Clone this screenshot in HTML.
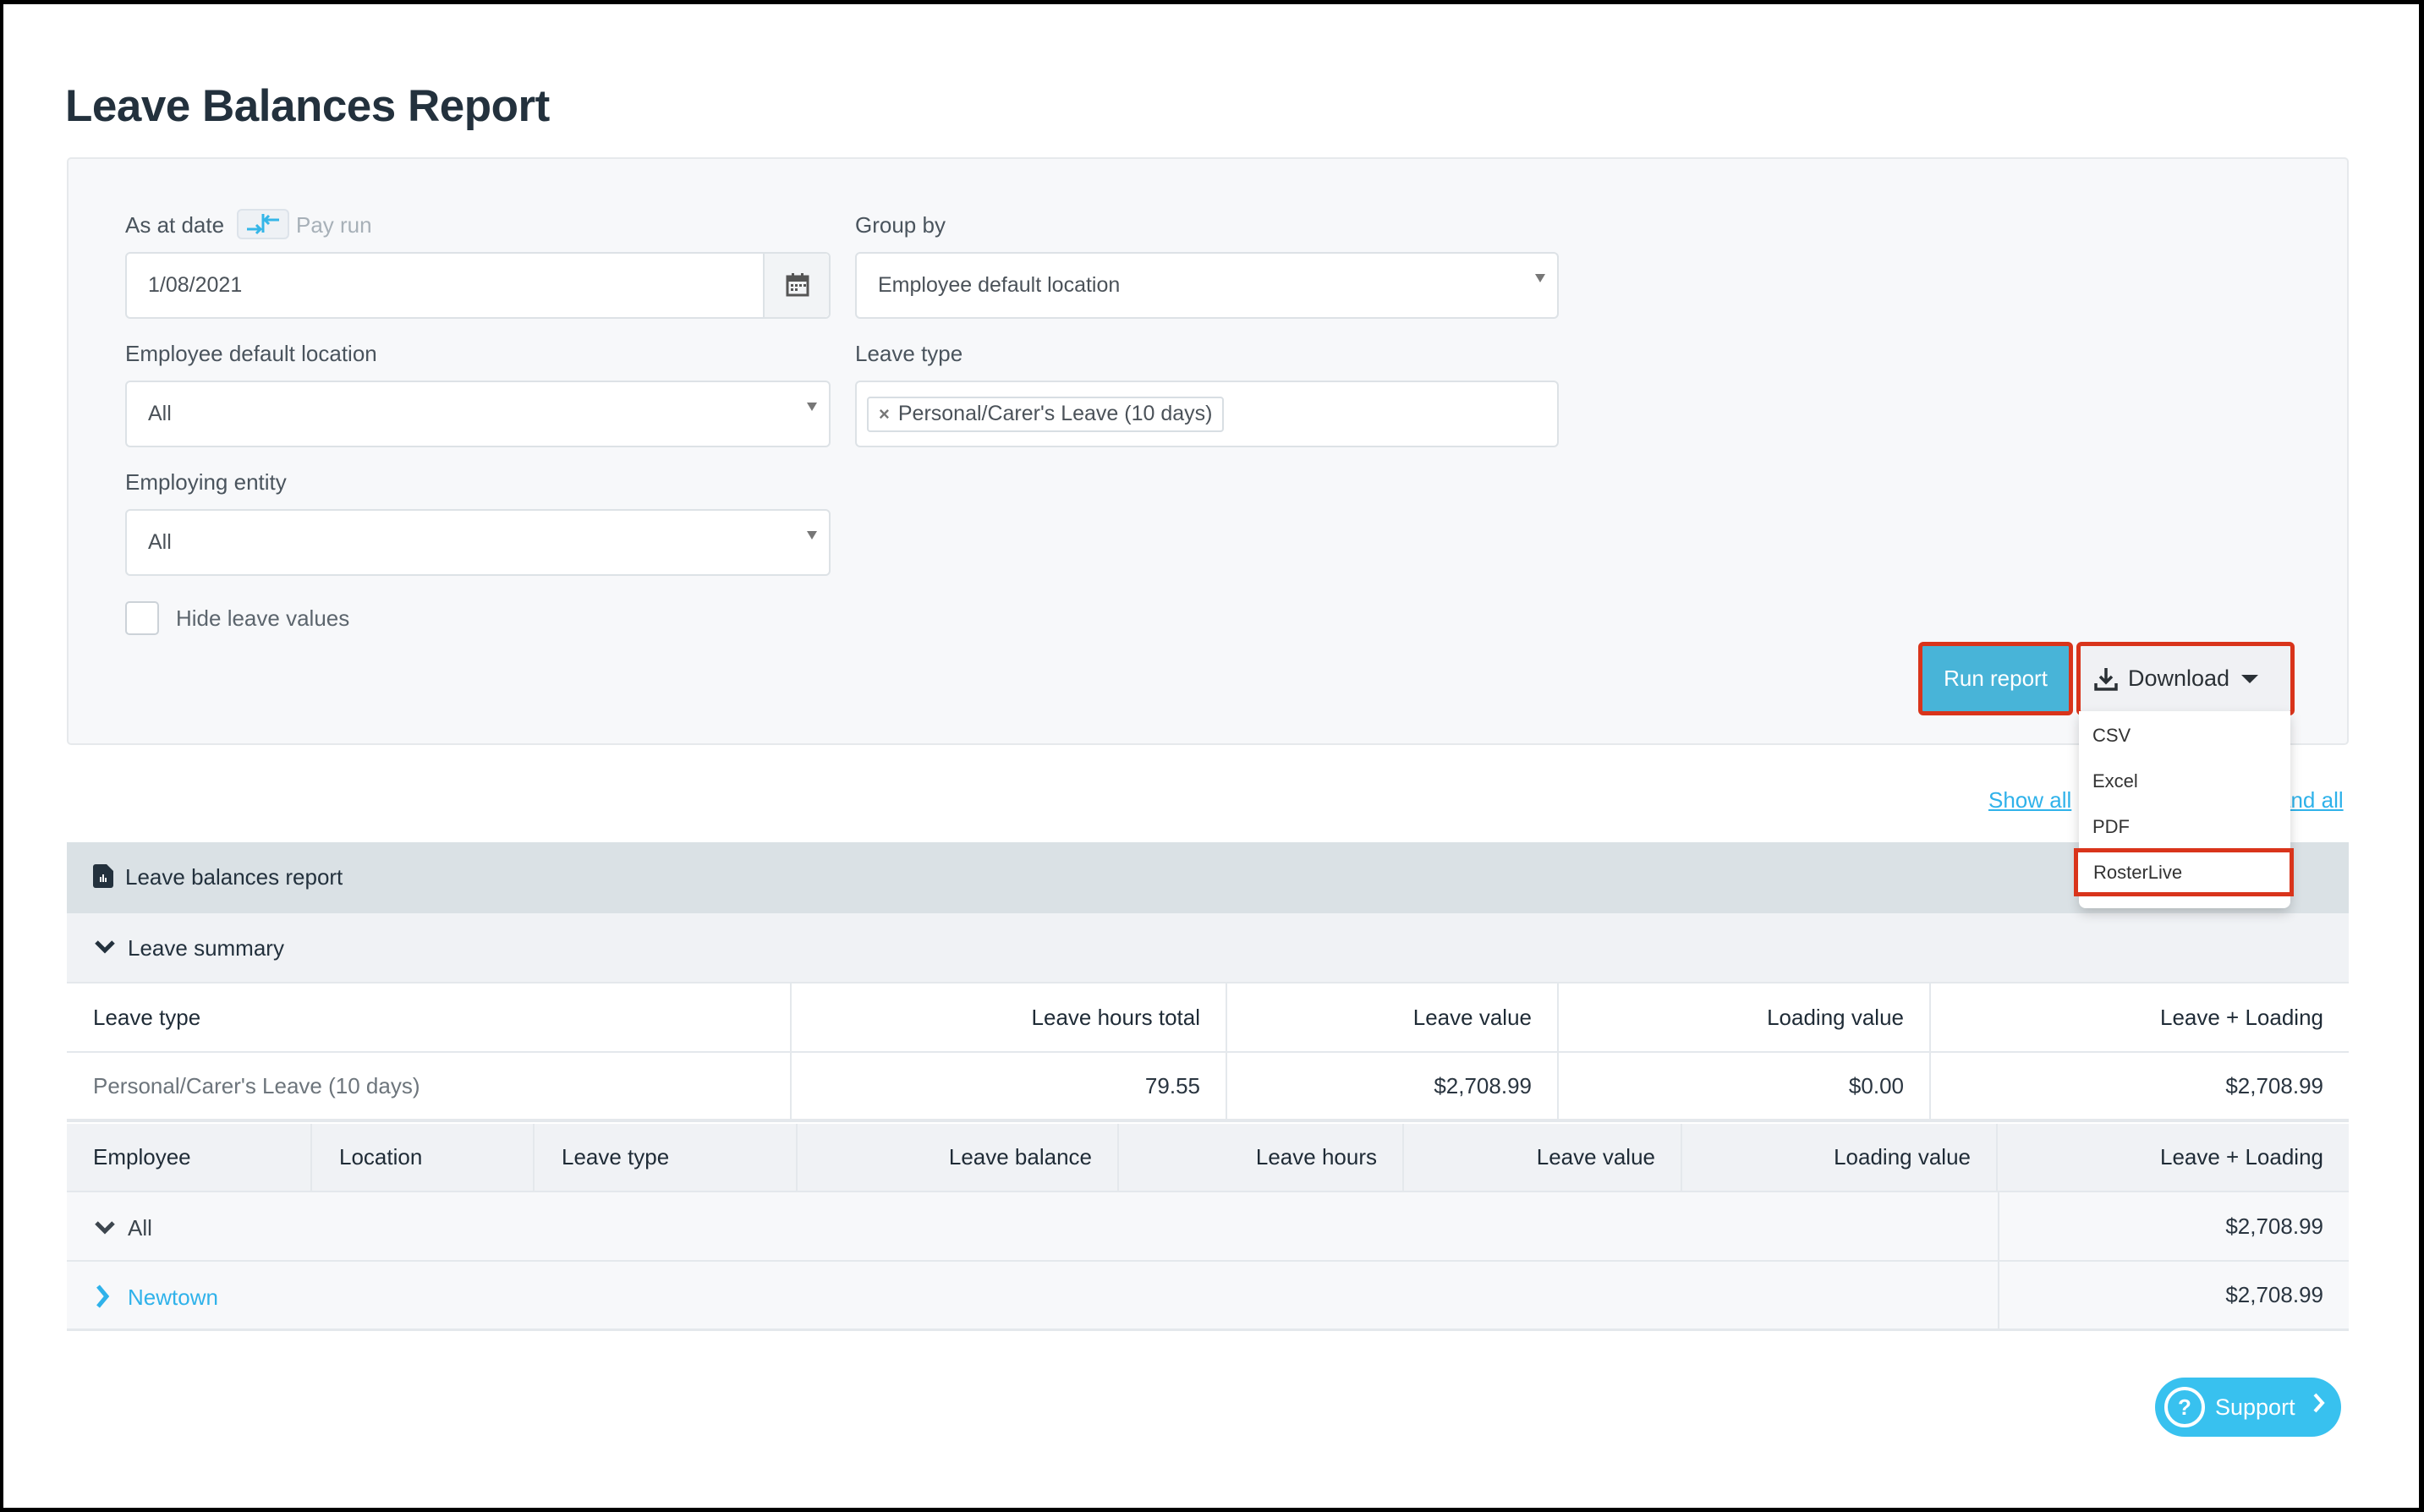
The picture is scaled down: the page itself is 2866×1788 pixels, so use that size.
<!DOCTYPE html>
<html><head><meta charset="utf-8">
<style>
*{box-sizing:border-box;margin:0;padding:0}
html,body{width:2866px;height:1788px;overflow:hidden;background:#000}
#page{position:absolute;left:4px;top:5px;width:2856px;height:1778px;background:#fff;font-family:"Liberation Sans",sans-serif;color:#2a3540}
.a{position:absolute}
.lbl{position:absolute;font-size:26px;color:#4a545d;white-space:nowrap}
.inp{position:absolute;background:#fff;border:2px solid #dde2e6;border-radius:6px;font-size:25px;color:#4b5259;padding-left:25px;display:flex;align-items:center}
.caret{position:absolute;right:14px;top:24px;width:0;height:0;border-left:6px solid transparent;border-right:6px solid transparent;border-top:10px solid #777}
.row{position:absolute;left:75px;width:2698px;border-bottom:2px solid #e4e8ec}
.c{position:absolute;top:0;height:100%;display:flex;align-items:center;font-size:26px;white-space:nowrap;border-right:2px solid #e4e8ec}
.r{justify-content:flex-end;padding-right:30px}
.l{padding-left:31px}
.h{color:#1f2b36}
</style></head><body><div id="page">
<div class="a" style="left:73px;top:90px;font-size:53px;font-weight:bold;color:#23313d;white-space:nowrap;letter-spacing:-0.5px">Leave Balances Report</div>

<div class="a" style="left:75px;top:181px;width:2698px;height:695px;background:#f7f8fa;border:2px solid #e6e9ec;border-radius:5px"></div>

<div class="lbl" style="left:144px;top:246px">As at date</div>
<div class="a" style="left:276px;top:242px;width:62px;height:36px;border:2px solid #dde3ea;border-radius:6px;background:#eef1f5">
<svg width="58" height="32" viewBox="0 0 58 32"><path d="M10 22h16m-5-5 5 5-5 5" stroke="#35b6e8" stroke-width="3" fill="none"/><path d="M48 11H31m5-5-5 5 5 5" stroke="#35b6e8" stroke-width="3" fill="none"/><path d="M29 4v22" stroke="#35b6e8" stroke-width="3"/></svg></div>
<div class="lbl" style="left:346px;top:246px;color:#a7b0b8">Pay run</div>
<div class="inp" style="left:144px;top:293px;width:834px;height:79px">1/08/2021
<div class="a" style="right:0;top:0;width:78px;height:75px;background:#f2f4f6;border-left:2px solid #dde2e6;border-radius:0 5px 5px 0">
<svg class="a" style="left:25px;top:23px" width="28" height="28" viewBox="0 0 28 28"><rect x="2" y="4" width="24" height="22" fill="none" stroke="#555" stroke-width="3"/><rect x="2" y="4" width="24" height="6" fill="#555"/><rect x="7" y="0" width="3" height="6" fill="#555"/><rect x="18" y="0" width="3" height="6" fill="#555"/><g fill="#555"><rect x="6" y="13" width="3" height="3"/><rect x="11" y="13" width="3" height="3"/><rect x="16" y="13" width="3" height="3"/><rect x="21" y="13" width="3" height="3"/><rect x="6" y="18" width="3" height="3"/><rect x="11" y="18" width="3" height="3"/></g></svg></div></div>

<div class="lbl" style="left:1007px;top:246px">Group by</div>
<div class="inp" style="left:1007px;top:293px;width:832px;height:79px">Employee default location<div class="caret"></div></div>

<div class="lbl" style="left:144px;top:398px">Employee default location</div>
<div class="inp" style="left:144px;top:445px;width:834px;height:79px">All<div class="caret"></div></div>

<div class="lbl" style="left:1007px;top:398px">Leave type</div>
<div class="inp" style="left:1007px;top:445px;width:832px;height:79px;padding-left:12px">
<div style="border:2px solid #d8dee3;border-radius:4px;height:42px;padding:0 12px;display:flex;align-items:center;font-size:25px;color:#4b5259;white-space:nowrap"><span style="font-weight:bold;color:#777;margin-right:10px;font-size:22px">×</span>Personal/Carer's Leave (10 days)</div></div>

<div class="lbl" style="left:144px;top:550px">Employing entity</div>
<div class="inp" style="left:144px;top:597px;width:834px;height:79px">All<div class="caret"></div></div>

<div class="a" style="left:144px;top:706px;width:40px;height:40px;background:#fff;border:2px solid #ccd2d8;border-radius:5px"></div>
<div class="lbl" style="left:204px;top:711px;color:#5c656d">Hide leave values</div>

<div class="a" style="left:2264px;top:754px;width:183px;height:87px;border:5px solid #d9341b;border-radius:6px;background:#48b4d8;color:#fff;font-size:26px;display:flex;align-items:center;justify-content:center">Run report</div>
<div class="a" style="left:2451px;top:754px;width:258px;height:87px;border:5px solid #d9341b;border-radius:6px;background:#f0f1f4;color:#2a3035;font-size:27px;display:flex;align-items:center;padding-left:16px">
<svg width="28" height="30" viewBox="0 0 28 30" style="margin-right:12px"><path d="M14 2v17m-7-7 7 7 7-7" stroke="#2a3035" stroke-width="3.5" fill="none"/><path d="M2 20v7h24v-7" stroke="#2a3035" stroke-width="3.5" fill="none"/></svg>Download<div style="margin-left:14px;border-left:10px solid transparent;border-right:10px solid transparent;border-top:10px solid #2a3035"></div></div>

<div class="a" style="left:2347px;top:926px;font-size:26px;color:#2fb2ea;text-decoration:underline">Show all</div>
<div class="a" style="left:2690px;top:926px;font-size:26px;color:#2fb2ea;text-decoration:underline">and all</div>

<div class="row" style="top:991px;height:84px;background:#dae1e5;border:none">
<svg class="a" style="left:31px;top:26px" width="24" height="28" viewBox="0 0 24 28"><path d="M3 0h13l8 8v17a3 3 0 0 1-3 3H3a3 3 0 0 1-3-3V3a3 3 0 0 1 3-3z" fill="#23313d"/><rect x="8" y="15" width="2" height="6" fill="#fff"/><rect x="11" y="12" width="2" height="9" fill="#fff"/><rect x="14" y="16" width="2" height="5" fill="#fff"/></svg>
<div class="a" style="left:69px;top:26px;font-size:26px;color:#23313d">Leave balances report</div></div>
<div class="row" style="top:1075px;height:83px;background:#f0f2f5">
<svg class="a" style="left:32px;top:30px" width="26" height="20" viewBox="0 0 26 20"><path d="M3 4l10 10 10-10" stroke="#23313d" stroke-width="5" fill="none"/></svg>
<div class="a" style="left:72px;top:26px;font-size:26px;color:#23313d">Leave summary</div></div>

<div class="row" style="top:1158px;height:82px;background:#fff">
<div class="c l h" style="left:0;width:857px">Leave type</div>
<div class="c r h" style="left:857px;width:515px">Leave hours total</div>
<div class="c r h" style="left:1372px;width:392px">Leave value</div>
<div class="c r h" style="left:1764px;width:440px">Loading value</div>
<div class="c r h" style="left:2204px;width:494px;border:none">Leave + Loading</div></div>
<div class="row" style="top:1240px;height:82px;background:#fff;border-bottom:4px solid #e4e8ec">
<div class="c l" style="left:0;width:857px;color:#6d757c">Personal/Carer's Leave (10 days)</div>
<div class="c r" style="left:857px;width:515px">79.55</div>
<div class="c r" style="left:1372px;width:392px">$2,708.99</div>
<div class="c r" style="left:1764px;width:440px">$0.00</div>
<div class="c r" style="left:2204px;width:494px;border:none">$2,708.99</div></div>

<div class="row" style="top:1324px;height:81px;background:#f0f2f5">
<div class="c l h" style="left:0;width:290px">Employee</div>
<div class="c l h" style="left:290px;width:263px;padding-left:32px">Location</div>
<div class="c l h" style="left:553px;width:311px;padding-left:32px">Leave type</div>
<div class="c r h" style="left:864px;width:380px">Leave balance</div>
<div class="c r h" style="left:1244px;width:337px">Leave hours</div>
<div class="c r h" style="left:1581px;width:329px">Leave value</div>
<div class="c r h" style="left:1910px;width:373px">Loading value</div>
<div class="c r h" style="left:2283px;width:415px;border:none">Leave + Loading</div></div>
<div class="row" style="top:1405px;height:82px;background:#f7f8fa">
<svg class="a" style="left:32px;top:32px" width="26" height="20" viewBox="0 0 26 20"><path d="M3 4l10 10 10-10" stroke="#3d464e" stroke-width="5" fill="none"/></svg>
<div class="a" style="left:72px;top:27px;font-size:26px;color:#3d464e">All</div>
<div class="c r" style="left:2283px;width:415px;border:none;border-left:2px solid #e4e8ec">$2,708.99</div></div>
<div class="row" style="top:1487px;height:82px;background:#f7f8fa;border-bottom:3px solid #e4e8ec">
<svg class="a" style="left:33px;top:26px" width="18" height="30" viewBox="0 0 18 30"><path d="M4 3l10 12-10 12" stroke="#2fb2ea" stroke-width="5" fill="none"/></svg>
<div class="a" style="left:72px;top:27px;font-size:26px;color:#2fb2ea">Newtown</div>
<div class="c r" style="left:2283px;width:415px;border:none;border-left:2px solid #e4e8ec">$2,708.99</div></div>

<div class="a" style="left:2454px;top:836px;width:250px;height:233px;background:#fff;border-radius:0 0 8px 8px;box-shadow:0 6px 14px rgba(0,0,0,.18)">
<div class="a" style="left:16px;top:16px;font-size:22px;color:#333">CSV</div>
<div class="a" style="left:16px;top:70px;font-size:22px;color:#333">Excel</div>
<div class="a" style="left:16px;top:124px;font-size:22px;color:#333">PDF</div>
</div>
<div class="a" style="left:2448px;top:998px;width:260px;height:57px;border:5px solid #d9341b;background:#fff;font-size:22px;color:#333;padding:11px 0 0 18px">RosterLive</div>

<div class="a" style="left:2544px;top:1624px;width:220px;height:70px;border-radius:35px;background:#38c1ef;color:#fff;font-size:27px;display:flex;align-items:center">
<div style="margin-left:11px;width:48px;height:48px;border:4px solid #fff;border-radius:50%;display:flex;align-items:center;justify-content:center;font-weight:bold;font-size:26px">?</div>
<span style="margin-left:12px">Support</span>
<svg style="margin-left:20px;margin-top:-10px" width="16" height="26" viewBox="0 0 16 26"><path d="M3 3l9 10-9 10" stroke="#fff" stroke-width="4" fill="none"/></svg></div>
</div></body></html>
